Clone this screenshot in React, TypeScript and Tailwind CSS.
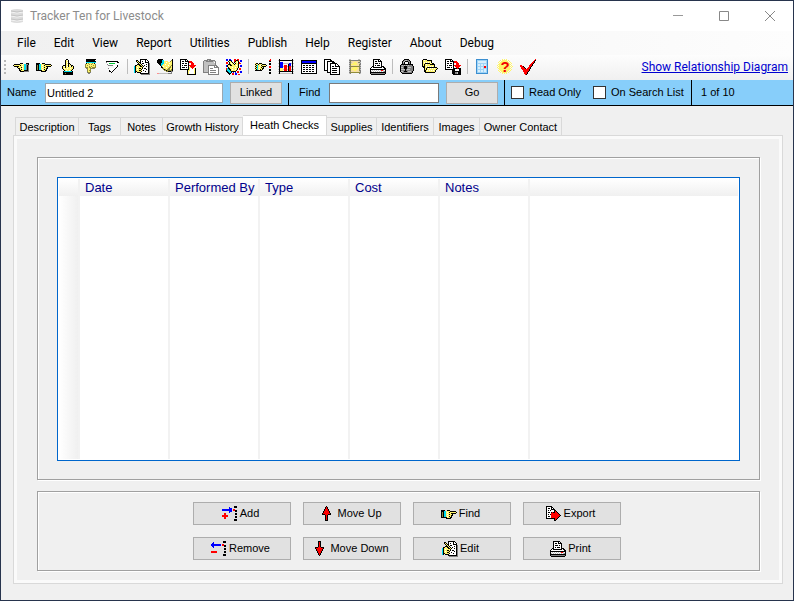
import { useState } from 'react';

const palette: Record<string, string> = {
  k: '#000000',
  w: '#ffffff',
  y: '#fff46b',
  Y: '#e8dc00',
  c: '#00dcf0',
  b: '#0000ff',
  r: '#ff0000',
  R: '#a00000',
  g: '#808080',
  l: '#c0c0c0',
  o: '#908c3c',
  e: '#00c832',
  s: '#f6dfa0',
  p: '#ff9090',
  t: '#3c8fd0',
  u: '#9fd4f7',
  v: '#d8effc',
};

const handRight = [
  '................',
  '................',
  '................',
  '................',
  'kkkk..kkk.......',
  'kkkccyyyykkkkkk.',
  'kokccywykyyyyyyk',
  'kokccyyyyykkkkk.',
  'kokccywykyyk....',
  'kokccyyyyykk....',
  'kokccywykyk.....',
  'kkkkkkyyykk.....',
  '.....kkkkk......',
];

const handLeft = [
  '................',
  '................',
  '................',
  '................',
  '.......kkk...kkk',
  '.kkkkkkyywyccggk',
  'kyyyyyykyyyccgkg',
  '.kkkkkyyywyccgkg',
  '....kyyykyyccgkg',
  '.....kkyywyccgkg',
  '......kykyyccgkg',
  '......kkyyykkkkg',
  '.......kkkkggggg',
];

const handUp = [
  '.......kk.......',
  '......kywk......',
  '......kyyk......',
  '......kywk......',
  '......kyykk.....',
  '......kywkyk....',
  '....kkkyykyykk..',
  '...kywkywkywkyk.',
  '...kyykyyyyyyyk.',
  '...kywyywyywyyk.',
  '....kyyyyyyyyk..',
  '.....kywyywyk...',
  '....kcccccccck..',
  '....kkkkkkkkkk..',
  '....kkokkkkkkk..',
  '....kkkkkkkkkk..',
];

const handDown = [
  '....kkkkkkkkkk..',
  '....kkkkkkkkk...',
  '....kkkkkkkkkk..',
  '....cccccccccc..',
  '....kyoyyyoyk...',
  '...oyyyoyoyyyo..',
  '...oyoyyyyyoyo..',
  '...oyyyoyoyyyo..',
  '...oooyooyoooo..',
  '....goyyoogog...',
  '.....oyyo.......',
  '.....oyoo.......',
  '.....oyyo.......',
  '.....goog.......',
  '......gg........',
];

const lastUsed = [
  '................',
  '................',
  '.kkkkkkkkkkkk...',
  '.gwwwwwwwwwwkk..',
  '..wweeeeeewww...',
  '..gwwwwwwwwww...',
  '...ggggg.wwwk...',
  '.........wwwk...',
  '.........wwk....',
  '...gwwwwwwk.....',
  '....wwwwwk......',
  '....kwwwk.......',
  '....kkwk........',
  '......k.........',
];

const editPage = [
  '......kkkkkkk...',
  '..kk..kwwwwkwk..',
  '..kyk.kwkwwkwwk.',
  '...kykkwwwwkkkk.',
  '....kykwkkwwwwkg',
  '...kkkykwwwwkwkg',
  '.kkyykkykwkwwwkg',
  'ckyyyykkykwwkwkg',
  'ckywyyyykwwwwwkg',
  'ckyyykkykwkkwwkg',
  'ckywyyykwwwwkwkg',
  'ckyyykkywkwwwwkg',
  'ckkyyyykwwwkwwkg',
  'ck.kkkkwwwwwwwkg',
  '......kkkkkkkkkg',
  '.......ggggggggg',
];

const assign = [
  '.kkkkk.........k',
  'kkkkkcc.......ok',
  'kkkkkccyyyy..oyk',
  'kkkkkccyywyyyyyk',
  '.kkkcccyyyyywyyk',
  '..kkccyywyyyyyyk',
  '...kcyyyyyywyyok',
  '....kywyyyyyyoyk',
  '....kkyyywyyooyk',
  '.....ooyyyyooyyk',
  '......okoyoooyok',
  '.......ookoooook',
  '.........ookkkgg',
  '..............g.',
  'pplllllllllgggg.',
];

const copyTo = [
  'kkkkkkk.........',
  'kwwwwkwk........',
  'kwkkwkkkkrrr....',
  'kwwwwwwwkrrrr...',
  'kwkkwkkwk..rrr..',
  'kwwwwwwwk..rrr..',
  'kwkwkkkwkrrrrrrr',
  'kwwwwwwwk.rrrrr.',
  'kwkkkwkwkyyrrr..',
  'kwwwwwwwkywwrwyk',
  'kkkkkkkkkywwwwyk',
  '.......kyywwwwyk',
  '.......kywwwwwyk',
  '.......kywwwwwyk',
  '.......kywwwwwyk',
  '.......kkkkkkkkk',
];

const paste = [
  '....gggg........',
  '.gggglgggggg....',
  'gllgggggggllg...',
  'gllllllllllwg...',
  'glllllllllllg...',
  'glllllllllllg...',
  'gllllggggggggg..',
  'gllllgwwwwwgwgg.',
  'gllllgwwwwwggggg',
  'gllllgwgggwwwwwg',
  'gllllgwwwwwwwwwg',
  'gllllgwggggggwwg',
  'gllllgwwwwwwwwwg',
  'ggggggwggggggwwg',
  '.....gwwwwwwwwwg',
  '.....ggggggggggg',
];

const pickColour = [
  'bb.bb...rr.rr...',
  'bb.kkb..rrkkr.bb',
  '..kyyk..rkyyk.bb',
  'rr.kyyk.kyywkr..',
  'rr.kywyk.kyykrr.',
  '..kkkyyykyyyk...',
  'bkyykkyyyywyk.bb',
  'bkywyyyyyyyyk.bb',
  '..kyyywyywyyk...',
  'rckkyyyyyyyk.rr.',
  'rcckkywyywyk.rr.',
  'kccckyyyyyk.....',
  'kkccckkkkk.rr.bb',
  '.kkcck.b.b.rr.bb',
  '..kkk.rr.bb.....',
  '...k..rr.bb.rr..',
];

const goTo = [
  '...............r',
  '..............rr',
  '..............kk',
  '................',
  'ykk.kkk.......kk',
  'kyykyyykkkk...kk',
  'ykcyywkyyyyk....',
  'kycyyyykkkk...rr',
  'ykcywykyk.....rr',
  'kycyyyykk.......',
  'ykcywkyk......kk',
  'kkkkkkk.......kk',
  '................',
  '..............kk',
  '..............kk',
];

const chart = [
  '.k............k.',
  'lkkkkkkkkkkkkkkl',
  '.k............k.',
  '.kbbb.........k.',
  'lkbbbllllllbblkl',
  '.kbbb.....kbb.k.',
  '.kbbb.rrr.kbb.k.',
  'lkbbblrrrlkrrlkl',
  '.kbbb.rrr.krr.k.',
  '.kyyy.rrr.krr.k.',
  'lkyyylrrrlkrrlkl',
  '.kyyy.rrr.krr.k.',
  'lkkkkkkkkkkkkkkl',
  '.k............k.',
  'lkllllllllllllkl',
];

const calendar = [
  '................',
  'kkkkkkkkkkkkkkkk',
  'kbbbbbbbbbbbbbbk',
  'kbbbbbbbbbbbbbbk',
  'kkkkkkkkkkkkkkkk',
  'kwwwwwwwwwwwwwwk',
  'kwkkwkkwkkwkkwwk',
  'kwwwwwwwwwwwwwwk',
  'kwkkwkkwkkwkkwwk',
  'kwwwwwwwwwwwwwwk',
  'kwkkwkkwkkwkkwwk',
  'kwwwwwwwwwwwwwwk',
  'kwkkwkkwkkwkkwwk',
  'kwwwwwwwwwwwwwwk',
  'kkkkkkkkkkkkkkkk',
];

const pages = [
  'kkkkkkk.........',
  'kwwwwwkk........',
  'kwwkkkkkkk......',
  'kwwkwwwwkkk.....',
  'kwwkwwkkkkkkk...',
  'kwwkwwkwwwwkwk..',
  'kwwkwwkwwwwkwwk.',
  'kwwkwwkwkkwkkkkk',
  'kwwkwwkwwwwwwwwk',
  'kwwkwwkwkkkkkwwk',
  'kwwkwwkwwwwwwwwk',
  'kkkkwwkwkkkkkwwk',
  '...kwwkwwwwwwwwk',
  '...kkkkwkkkkkwwk',
  '......kwwwwwwwwk',
  '......kkkkkkkkkk',
];

const film = [
  '..ll.......ll...',
  '..goggggggggog..',
  '..lgsssssssslg..',
  '..golssyyssgol..',
  '..lgssyyyysslg..',
  '..goyyyyyyssog..',
  '..lgssssssssgl..',
  '..goooooooooog..',
  '..lgssyyyyssgl..',
  '..gosyyyyyysog..',
  '..lgyyyyyyssgl..',
  '..gosssyysssog..',
  '..lgsssssssslg..',
  '..goooooooooog..',
  '..lg........gl..',
];

const printer = [
  '...kkkkkkk......',
  '...kwwwwkwk.....',
  '...kwkkwkkkk....',
  '...kwwwwwwwk....',
  '...kwkkkwkwk....',
  '...kwwwwwwwk....',
  '...kwkwkkkwk....',
  '..kkwwwwwwwkkk..',
  '.kwkkkkkkkkkwkk.',
  'kwwwwwwwwwwwwwkk',
  'kkkkkkkkkkkkkkkk',
  'kwlwlwlwlwlrrlwk',
  'klwlwlwlwlwlwlgk',
  'kkkkkkkkkkkkkkkk',
  'kggggggggggggggk',
  '.kkkkkkkkkkkkkk.',
];

const lock = [
  '.....kkkkk......',
  '....kgllggk.....',
  '...kglkkkggk....',
  '...klk...kgk....',
  '...kgk...kgk....',
  '..kkkkkkkkkkkk..',
  '.kglglglglgggk..',
  '.kgggkkkggggggk.',
  '.kllgkkkglllggk.',
  '.kgggkkkggggggk.',
  '.kllllkglllgggk.',
  '.kggggkgggggggk.',
  '.kllgkkkglllgk..',
  '..kggggggggggk..',
  '...kkkkkkkkkk...',
];

const folders = [
  '.kkkk...........',
  'kywyykkkkk......',
  'kyyyyyyyyk......',
  'kywywywywk......',
  'kyykkkkkyykk....',
  'kykywyyykkkkk...',
  'kykyyyyyyyyyk...',
  'kkkywywywywyk...',
  '.kkyykkkkkkkkkk.',
  '..kykywywywywyyk',
  '..kykyyyyyyyyyk.',
  '..kkywywywywyk..',
  '..kkyyyyyyyyyk..',
  '...kkkkkkkkkk...',
];

const saveTo = [
  'kkkkkkk.........',
  'kwwwwkwk........',
  'kwkkwkkkkrrr....',
  'kwwwwwwwkrrrr...',
  'kwkkwkkwk..rrr..',
  'kwwwwwwwk..rrr..',
  'kwkwkkkwkrrrrrrr',
  'kwwwwwwwk.rrrrr.',
  'kwkkkwkwk..rrr..',
  'kwwwwwwwkkkkrkkk',
  'kkkkkkkkkkwwwwkk',
  '.......kkkwwwwkk',
  '.......kkkkkkkkk',
  '.......kkkgglkkk',
  '.......kkkgglkkk',
  '........kkkkkkkk',
];

const calculator = [
  '..tttttttttttt..',
  '..tuuuuuuuuuut..',
  '..tuvvvvvvvvut..',
  '..tuvvvvvvvvut..',
  '..tuuuuuuuuuut..',
  '..tuvvuvvuvvut..',
  '..tuvvuvvuvvut..',
  '..tuuuuuuurrut..',
  '..tuvvuvvurrut..',
  '..tuvvuvvuuuut..',
  '..tuuuuuuuvvut..',
  '..tuvvuvvuvvut..',
  '..tuvvuvvuvvut..',
  '..tuuuuuuuuuut..',
  '..tttttttttttt..',
];

const halo = [
  '.....y.y.y......',
  '...y.yyyyy.y....',
  '..y.yyyyyyy.y...',
  '.y.yyyyyyyyy.y..',
  '..yyyyyyyyyyy.y.',
  '.yyyyyyyyyyyyy..',
  'y.yyyyyyyyyyy.y.',
  '.yyyyyyyyyyyyy.y',
  'y.yyyyyyyyyyy.y.',
  '.yyyyyyyyyyyyy..',
  '..yyyyyyyyyyy.y.',
  '.y.yyyyyyyyy.y..',
  '..y.yyyyyyy.y...',
  '...y.yyyyy.y....',
  '.....y.y.y......',
];

const check = [
  '...............r',
  '..............rk',
  '.............rk.',
  '............rrk.',
  '...........rrk..',
  '..........rrk...',
  'rr.......rrrk...',
  'rrrk.....rrk....',
  '.rrrk...rrk.....',
  '.rrrrk.rrrk.....',
  '..rrrrrrrk......',
  '...rrrrrrk......',
  '...rrrrrk.......',
  '....rrrk........',
  '....rrrk........',
  '.....rk.........',
];

const addRow = [
  '............kkk.',
  '.......b....kkk.',
  '.......bbb......',
  'bbbbbbbbbb.rr...',
  'bbbbbbbbbb.rrkk.',
  '.......bbb...kk.',
  '.......b........',
  '..rr.........kk.',
  '..rr.........kk.',
  'rrrrrr..........',
  'rrrrrr.......kk.',
  '..rr.........kk.',
  '..rr............',
  '............kkk.',
  '............kkk.',
];

const removeRow = [
  '............kkk.',
  '..b.........kkk.',
  '.bb.............',
  'bbbbbbbbbb.rr...',
  'bbbbbbbbbb.rrkk.',
  '.bb..........kk.',
  '..b.............',
  '.............kk.',
  '.............kk.',
  '................',
  'rrrrrr.......kk.',
  'rrrrrr.......kk.',
  '................',
  '............kkk.',
  '............kkk.',
];

const arrowUp = [
  '.......k........',
  '......krk.......',
  '......krk.......',
  '.....krrrk......',
  '.....krrrk......',
  '....krrrrrk.....',
  '....krrrrrk.....',
  '...krrrrrrrk....',
  '...kkkrrrkkk....',
  '......krk.......',
  '......krk.......',
  '......krk.......',
  '......krk.......',
  '......krk.......',
  '......kkk.......',
];

const arrowDown = [...arrowUp].reverse();

const exportPage = [
  'kkkkkk..........',
  'kwwwwkk.........',
  'kwkkwkwk........',
  'kwwwwkkkk.......',
  'kwkwkwwwkk......',
  'kwwwwwwwkrk.....',
  'kwkkwkrkkrrk....',
  'kwwwwrrrrrrrk...',
  'kwkwkrrrrrrrrk..',
  'kwwwwrrrrrrrrrk.',
  'kwkkwrrrrrrrrk..',
  'kwwwwrrrrrrrk...',
  'kkkkkkkkkrrk....',
  '........krk.....',
  '........kk......',
];

const PixelIcon = ({ rows, mark }: { rows: string[]; mark?: string }) => (
  <svg width="16" height="16" viewBox="0 0 16 16" shapeRendering="crispEdges" aria-hidden="true">
    {rows.map((row, y) =>
      [...row].map((p, x) => (p === '.' ? null : <rect key={`${x}-${y}`} x={x} y={y} width="1" height="1" fill={palette[p]} />)),
    )}
    {mark && (
      <text x="8" y="13" textAnchor="middle" fontFamily="Liberation Sans, sans-serif" fontSize="15" fontWeight="bold" fill="#f00000">
        {mark}
      </text>
    )}
  </svg>
);

type Tool = { label: string; rows: string[]; mark?: string };

const tools: Tool[][] = [
  [
    { label: 'Previous', rows: handLeft },
    { label: 'Next', rows: handRight },
    { label: 'First', rows: handUp },
    { label: 'Last', rows: handDown },
    { label: 'Go back', rows: lastUsed },
  ],
  [
    { label: 'Edit item', rows: editPage },
    { label: 'Assign', rows: assign },
    { label: 'Copy', rows: copyTo },
    { label: 'Paste', rows: paste },
    { label: 'Colours', rows: pickColour },
  ],
  [
    { label: 'Go to', rows: goTo },
    { label: 'Chart', rows: chart },
    { label: 'Calendar', rows: calendar },
    { label: 'Pages', rows: pages },
    { label: 'Media', rows: film },
    { label: 'Print item', rows: printer },
  ],
  [
    { label: 'Lock', rows: lock },
    { label: 'Open', rows: folders },
    { label: 'Save', rows: saveTo },
  ],
  [
    { label: 'Calculator', rows: calculator },
    { label: 'Help topics', rows: halo, mark: '?' },
    { label: 'Check', rows: check },
  ],
];

const menus = ['File', 'Edit', 'View', 'Report', 'Utilities', 'Publish', 'Help', 'Register', 'About', 'Debug'];

const tabs = [
  { name: 'Description', width: 'w-16' },
  { name: 'Tags', width: 'w-[42px]' },
  { name: 'Notes', width: 'w-[42px]' },
  { name: 'Growth History', width: 'w-20' },
  { name: 'Heath Checks', width: 'w-[84px]' },
  { name: 'Supplies', width: 'w-[50px]' },
  { name: 'Identifiers', width: 'w-[57px]' },
  { name: 'Images', width: 'w-[46px]' },
  { name: 'Owner Contact', width: 'w-[82px]' },
];

const columns = ['Date', 'Performed By', 'Type', 'Cost', 'Notes'];

const actions = [
  { name: 'Add', rows: addRow },
  { name: 'Move Up', rows: arrowUp },
  { name: 'Find', rows: handRight },
  { name: 'Export', rows: exportPage },
  { name: 'Remove', rows: removeRow },
  { name: 'Move Down', rows: arrowDown },
  { name: 'Edit', rows: editPage },
  { name: 'Print', rows: printer },
];

const TitleBar = () => (
  <header className="flex h-[30px] items-center bg-white pl-2 font-['Roboto',sans-serif] text-xs text-[#8c8c8c]">
    <svg width="16" height="16" viewBox="0 0 16 16" className="mr-[5px]" aria-hidden="true">
      <path d="M2 2 Q8 0 14 2 V14 Q8 16 2 14 Z" fill="#dcdcdc" />
      <path d="M2 4 Q8 6 14 4 M2 8 Q8 10 14 8 M2 12 Q8 14 14 12" fill="none" stroke="#f4f4f4" />
      <path d="M2 3 Q8 5 14 3 M2 7 Q8 9 14 7 M2 11 Q8 13 14 11" fill="none" stroke="#c4c4c4" />
    </svg>
    <h1 className="flex-1">Tracker Ten for Livestock</h1>
    <button type="button" aria-label="Minimize" className="flex w-[46px] justify-center">
      <svg width="10" height="10" fill="none" stroke="#999999"><path d="M0 4.5 H10" /></svg>
    </button>
    <button type="button" aria-label="Maximize" className="flex w-[46px] justify-center">
      <svg width="10" height="10" fill="none" stroke="#888888"><path d="M.5 .5 H9.5 V9.5 H.5 Z" /></svg>
    </button>
    <button type="button" aria-label="Close" className="flex w-[46px] justify-center">
      <svg width="10" height="10" fill="none" stroke="#888888"><path d="M0 0 L10 10 M10 0 L0 10" /></svg>
    </button>
  </header>
);

const Toolbar = () => (
  <div className="flex h-[25px] items-center bg-gradient-to-b from-[#fdfdfd] to-[#f0f0f0] pb-0.5 pl-[3px] pr-[5px]">
    <svg width="3" height="16" fill="#b8b8b8" className="mr-1.5" aria-hidden="true">
      <path d="M0 1h2v2H0z M0 5h2v2H0z M0 9h2v2H0z M0 13h2v2H0z" />
    </svg>
    {tools.map((group, i) => (
      <div key={i} className="flex items-center">
        {i > 0 && <span className="mr-1.5 h-[15px] w-px bg-[#bdbdbd]" />}
        <div className="mr-1.5 flex gap-[7px]">
          {group.map((t) => (
            <button key={t.label} type="button" aria-label={t.label}>
              <PixelIcon rows={t.rows} mark={t.mark} />
            </button>
          ))}
        </div>
      </div>
    ))}
    <a href="#diagram" className="ml-auto font-['Roboto',sans-serif] text-xs text-[#0000d0] underline">
      Show Relationship Diagram
    </a>
  </div>
);

const RecordBar = () => {
  const [name, setName] = useState('Untitled 2');
  const [query, setQuery] = useState('');

  return (
    <div className="flex h-[26px] items-center border-b border-black bg-[#87cefa] pl-1.5 text-[11px]">
      <label htmlFor="name" className="w-[38px]">Name</label>
      <input
        id="name"
        value={name}
        onChange={(e) => setName(e.target.value)}
        className="h-5 w-[178px] border border-[#9aa7b0] bg-white px-px outline-none"
      />
      <button type="button" className="ml-[7px] h-[22px] w-[52px] border border-[#adadad] bg-[#e1e1e1]">Linked</button>
      <span className="ml-1.5 h-[22px] w-px self-end bg-black" />
      <label htmlFor="find" className="ml-2.5 w-[30px]">Find</label>
      <input
        id="find"
        value={query}
        onChange={(e) => setQuery(e.target.value)}
        className="h-5 w-[110px] border border-[#7a7a7a] bg-white px-px outline-none"
      />
      <button type="button" className="ml-[7px] h-[22px] w-[52px] border border-[#adadad] bg-[#e1e1e1]">Go</button>
      <span className="ml-1.5 w-px self-stretch bg-black" />
      <label className="ml-1.5 flex w-[82px] items-center gap-[5px] whitespace-nowrap">
        <input type="checkbox" className="size-[13px] appearance-none border border-[#333333] bg-white checked:bg-[#333333]" />
        Read Only
      </label>
      <label className="flex w-[98px] items-center gap-[5px] whitespace-nowrap">
        <input type="checkbox" className="size-[13px] appearance-none border border-[#333333] bg-white checked:bg-[#333333]" />
        On Search List
      </label>
      <span className="w-px self-stretch bg-black" />
      <span className="ml-[9px] whitespace-nowrap">1 of 10</span>
    </div>
  );
};

const CheckTable = () => (
  <div className="flex flex-1 border border-[#0066cc] bg-white p-px">
    <table className="w-full table-fixed border-collapse">
      <thead>
        <tr className="h-[17px] bg-gradient-to-b from-white to-[#f0f0f0]">
          <td className="w-5 border-r-2 border-[#f2f2f2]" />
          {columns.map((c) => (
            <th key={c} scope="col" className="w-[90px] whitespace-nowrap border-r-2 border-[#f2f2f2] pl-[5px] text-left text-[13px] leading-[17px] font-normal text-[#00008b]">
              {c}
            </th>
          ))}
          <td />
        </tr>
      </thead>
      <tbody>
        <tr>
          <td className="border-r-2 border-[#f2f2f2] bg-gradient-to-r from-white to-[#f0f0f0]" />
          {columns.map((c) => (
            <td key={c} className="border-r-2 border-[#f2f2f2]" />
          ))}
          <td />
        </tr>
      </tbody>
    </table>
  </div>
);

const App = () => {
  const [active, setActive] = useState('Heath Checks');

  return (
    <div className="flex min-h-screen flex-col border border-[#27344d] bg-[#f0f0f0] font-['Liberation_Sans',Arial,sans-serif] text-black">
      <TitleBar />
      <nav className="flex h-6 items-center gap-[18px] bg-gradient-to-r from-[#f0f0f0] to-[#fdfdfd] pl-4 font-['Roboto',sans-serif] text-xs">
        {menus.map((m) => (
          <button key={m} type="button">{m}</button>
        ))}
      </nav>
      <Toolbar />
      <RecordBar />

      <main className="flex flex-1 flex-col pt-[9px] pr-2.5 pb-4 pl-3">
        <div role="tablist" className="flex items-end pl-0.5 text-[11px]">
          {tabs.map((t, i) => (
            <button
              key={t.name}
              type="button"
              role="tab"
              aria-selected={t.name === active}
              onClick={() => setActive(t.name)}
              className={`${t.width} flex justify-center whitespace-nowrap border-[#d9d9d9] ${i === 0 ? 'border-l' : ''} ${
                t.name === active ? 'h-5 border-t border-r bg-white pt-px' : 'h-[18px] border-t border-r pt-px'
              }`}
            >
              {t.name}
            </button>
          ))}
        </div>

        <section className="flex flex-1 flex-col gap-[11px] border border-[#d9d9d9] pt-[21px] pr-[22px] pb-3 pl-[23px] shadow-[inset_0_0_0_3px_#fafafa]">
          <div className="flex flex-1 flex-col border border-[#a0a0a0] px-[19px] pt-[19px] pb-[18px] shadow-[inset_1px_1px_0_#ffffff,1px_1px_0_#ffffff]">
            <CheckTable />
          </div>
          <div className="border border-[#a0a0a0] py-2.5 pl-4 shadow-[inset_1px_1px_0_#ffffff,1px_1px_0_#ffffff]">
            <div className="mx-auto grid w-fit grid-cols-4 gap-3 text-[11px]">
              {actions.map((a) => (
                <button key={a.name} type="button" className="flex h-[23px] w-[98px] items-center justify-center gap-0.5 border border-[#adadad] bg-[#e1e1e1] pr-0.5">
                  <PixelIcon rows={a.rows} />
                  {a.name}
                </button>
              ))}
            </div>
          </div>
        </section>
      </main>
    </div>
  );
};

export default App;
